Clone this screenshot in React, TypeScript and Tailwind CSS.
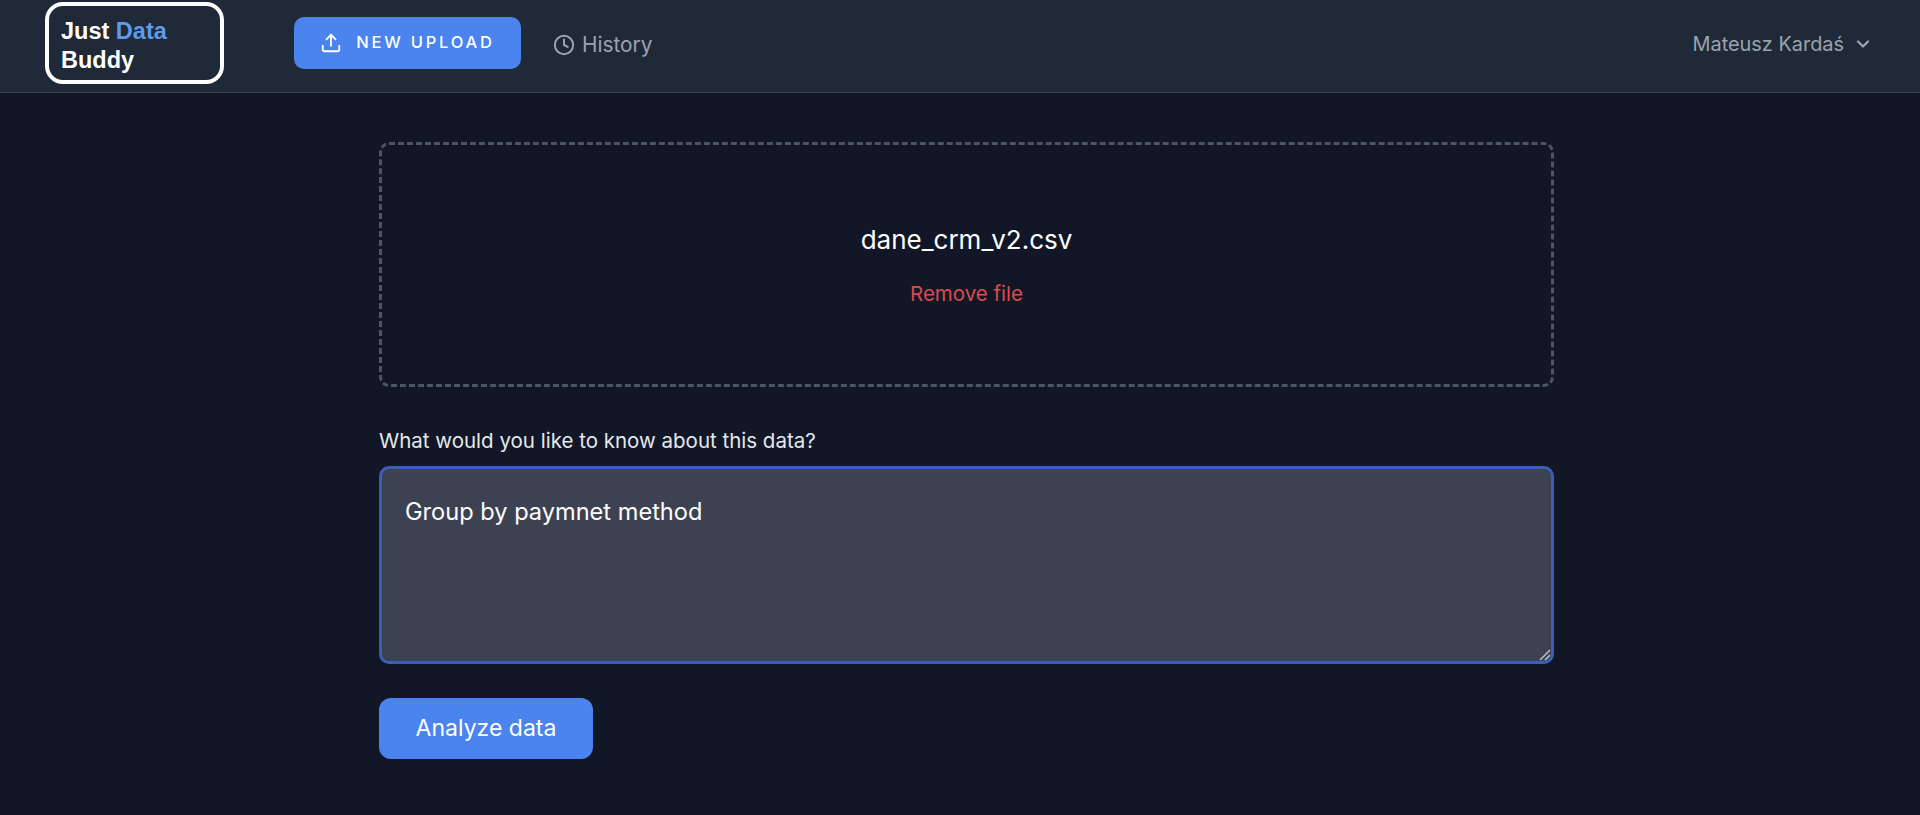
import { ChevronDown, Clock, Upload } from "lucide-react";

export default function App() {
  return (
    <div className="min-h-[815px] h-[815px] overflow-hidden bg-[#111726] font-['Inter',sans-serif]">
      {/* Nav */}
      <nav className="h-[93px] flex items-center bg-[#1f2937] border-b border-[#374151] pl-[45px] pr-[47px]">
        <div className="w-[179px] h-[82px] mb-[7px] border-[4px] border-white rounded-[18px] pl-[12px] pt-[11px] font-['Liberation_Sans',sans-serif] font-bold text-[23.5px] leading-[29px] text-white">
          Just <span className="text-[#5f9bea]">Data</span>
          <br />
          Buddy
        </div>
        <button className="ml-[70px] mb-[7px] w-[227px] h-[52px] flex items-center justify-center gap-[14px] rounded-[10px] bg-[#4b84ee] text-white text-[16.5px] font-medium tracking-[2.8px]">
          <Upload size={22} strokeWidth={2} />
          NEW UPLOAD
        </button>
        <a className="ml-[32px] mb-[2px] flex items-center gap-[7px] text-[20.8px] text-[#9ca3af]">
          <Clock size={22} strokeWidth={2.2} />
          History
        </a>
        <div className="ml-auto mb-[3px] flex items-center gap-[9px] text-[19.9px] text-[#9ca3af]">
          Mateusz Kardaś
          <ChevronDown size={20} strokeWidth={2.8} />
        </div>
      </nav>

      {/* Content */}
      <main className="pl-[379px] pt-[49px]">
        <div className="w-[1175px]">
          <div className="h-[245px] flex flex-col items-center border-[3px] border-dashed border-[#4b5563] rounded-[10px] pt-[79px]">
            <p className="text-[26px] leading-[32px] text-white">dane_crm_v2.csv</p>
            <button className="mt-[25px] text-[20.5px] leading-[26px] text-[#dc4a4a]">Remove file</button>
          </div>
          <label className="block mt-[41px] text-[20.5px] leading-[26px] text-[#e5e7eb]">
            What would you like to know about this data?
          </label>
          <div className="relative mt-[12px]">
            <textarea
              className="block w-full h-[198px] resize-none rounded-[10px] border-[3px] border-[#3b5fb8] bg-[#3c4252] px-[23px] pt-[27px] text-[23.6px] leading-[32px] text-white outline-none"
              defaultValue="Group by paymnet method"
            />
            {/* resize grip */}
            <svg className="absolute right-[3px] bottom-[3px]" width="13" height="13" viewBox="0 0 13 13">
              <path d="M2 12 L12 2 M7 12 L12 7" stroke="#b9bdc5" strokeWidth="1.6" fill="none" />
            </svg>
          </div>
          <button className="block mt-[34px] w-[214px] h-[61px] rounded-[12px] bg-[#4b84ee] text-[23px] text-white">
            Analyze data
          </button>
        </div>
      </main>
    </div>
  );
}
